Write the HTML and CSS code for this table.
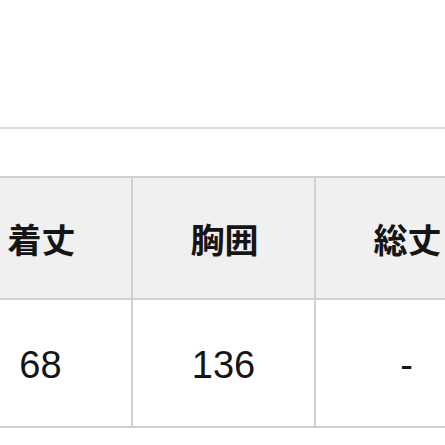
FILE: index.html
```html
<!DOCTYPE html>
<html lang="ja">
<head>
<meta charset="utf-8">
<link rel="stylesheet" href="styles.css">
</head>
<body>
<div class="page">
  <div class="rule"></div>
  <div class="table">
    <div class="cell head">着丈</div>
    <div class="cell head">胸囲</div>
    <div class="cell head">総丈</div>
    <div class="cell data">68</div>
    <div class="cell data">136</div>
    <div class="cell data">-</div>
  </div>
</div>
</body>
</html>
```
FILE: styles.css
```css
html, body {
  margin: 0;
  padding: 0;
  background: #ffffff;
  overflow: hidden;
}
.page {
  width: 445px;
  height: 445px;
  overflow: hidden;
  padding-top: 127px;
  box-sizing: border-box;
}
.rule {
  height: 2px;
  background: #dadada;
}
.table {
  margin-top: 47px;
  margin-left: -50px;
  width: 547px;
  display: grid;
  grid-template-columns: 181px 181px 181px;
  grid-template-rows: 120px 126px;
  gap: 2px;
  background: #d0d0d0;
  border-top: 2px solid #d0d0d0;
  border-bottom: 2px solid #d0d0d0;
}
.cell {
  display: flex;
  align-items: center;
  justify-content: center;
  color: #151515;
}
.head {
  background: #f0f0f0;
  font-family: "Noto Sans CJK JP", "Liberation Sans", sans-serif;
  font-weight: 700;
  font-size: 34px;
  padding-left: 2px;
}
.data {
  background: #ffffff;
  font-family: "Liberation Sans", "Noto Sans CJK JP", sans-serif;
  font-size: 38px;
  padding-top: 4px;
}
```
